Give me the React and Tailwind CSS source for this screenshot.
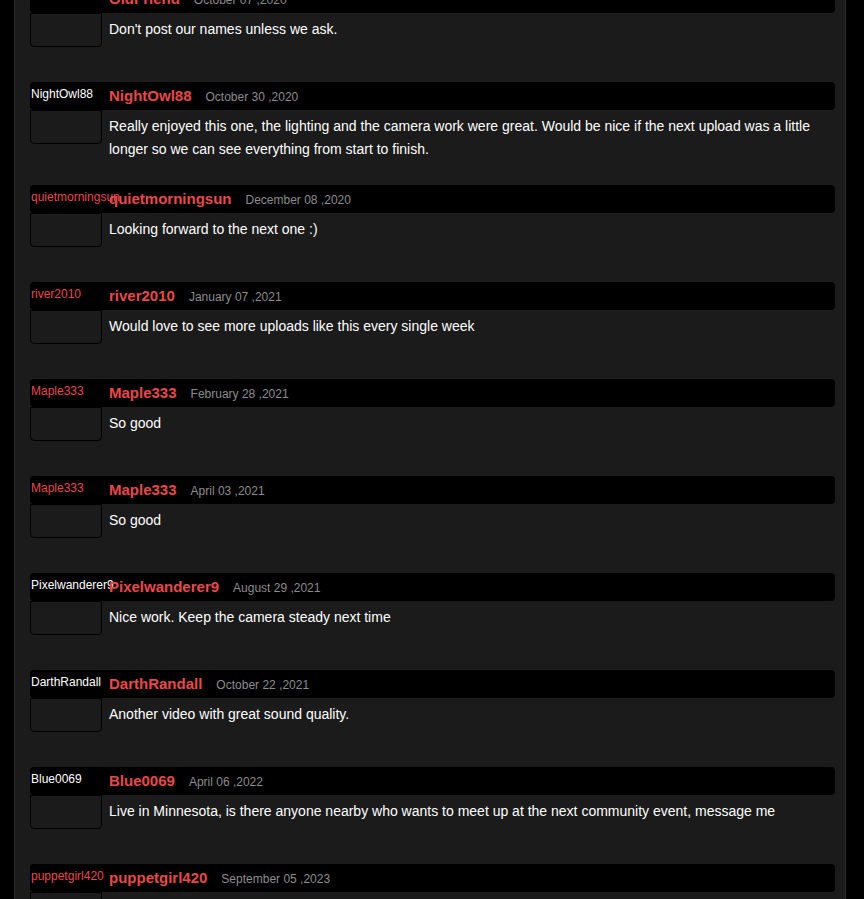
import React from 'react';

const comments = [
  { user: 'NightOwl88', labelRed: false, date: 'October 30 ,2020', text: 'Really enjoyed this one, the lighting and the camera work were great. Would be nice if the next upload was a little longer so we can see everything from start to finish.' },
  { user: 'quietmorningsun', labelRed: true, date: 'December 08 ,2020', text: 'Looking forward to the next one :)' },
  { user: 'river2010', labelRed: true, date: 'January 07 ,2021', text: 'Would love to see more uploads like this every single week' },
  { user: 'Maple333', labelRed: true, date: 'February 28 ,2021', text: 'So good' },
  { user: 'Maple333', labelRed: true, date: 'April 03 ,2021', text: 'So good' },
  { user: 'Pixelwanderer9', labelRed: false, date: 'August 29 ,2021', text: 'Nice work. Keep the camera steady next time' },
  { user: 'DarthRandall', labelRed: false, date: 'October 22 ,2021', text: 'Another video with great sound quality.' },
  { user: 'Blue0069', labelRed: false, date: 'April 06 ,2022', text: 'Live in Minnesota, is there anyone nearby who wants to meet up at the next community event, message me' },
  { user: 'puppetgirl420', labelRed: true, date: 'September 05 ,2023', text: 'Thanks for posting this' },
];

const Comment = ({ user, labelRed, date, text }) => (
  <div>
    <div className="flex h-[28px] bg-black rounded-[4px]">
      <div className={`w-[79px] shrink-0 pl-[1px] pt-[5px] text-[12px] leading-[14px] whitespace-nowrap ${labelRed ? 'text-[#e8474c]' : 'text-white'}`}>
        {user}
      </div>
      <div className="flex items-center">
        <span className="text-[15px] font-bold text-[#e8474c]">{user}</span>
        <span className="ml-[14px] pt-[2px] text-[12px] text-[#8c8c8c]">{date}</span>
      </div>
    </div>
    <div className="flex items-start">
      <div className="w-[72px] h-[34px] mb-[35px] shrink-0 border border-black rounded-b-[4px]" />
      <p className="ml-[7px] pt-[5px] mb-[24px] text-[14px] leading-[23px] text-white">{text}</p>
    </div>
  </div>
);

export default function App() {
  return (
    <div className="min-h-[899px] bg-black" style={{ fontFamily: '"Liberation Sans", Arial, sans-serif' }}>
      <div className="ml-[14px] w-[832px] min-h-[899px] bg-[#1b1b1b] border-l border-r border-[#2e2e2e] overflow-hidden">
        <div className="pl-[15px] pr-[10px] -mt-[15px]">
          <div>
            <div className="flex h-[28px] bg-black rounded-[4px]">
              <div className="w-[79px] shrink-0" />
              <div className="flex items-center">
                <span className="text-[15px] font-bold text-[#e8474c]">OldFriend</span>
                <span className="ml-[14px] pt-[2px] text-[12px] text-[#8c8c8c]">October 07 ,2020</span>
              </div>
            </div>
            <div className="flex items-start">
              <div className="w-[72px] h-[34px] mb-[35px] shrink-0 border border-black rounded-b-[4px]" />
              <p className="ml-[7px] pt-[5px] mb-[24px] text-[14px] leading-[23px] text-white">Don't post our names unless we ask.</p>
            </div>
          </div>
          {comments.map((c, i) => (
            <Comment key={i} {...c} />
          ))}
        </div>
      </div>
    </div>
  );
}
